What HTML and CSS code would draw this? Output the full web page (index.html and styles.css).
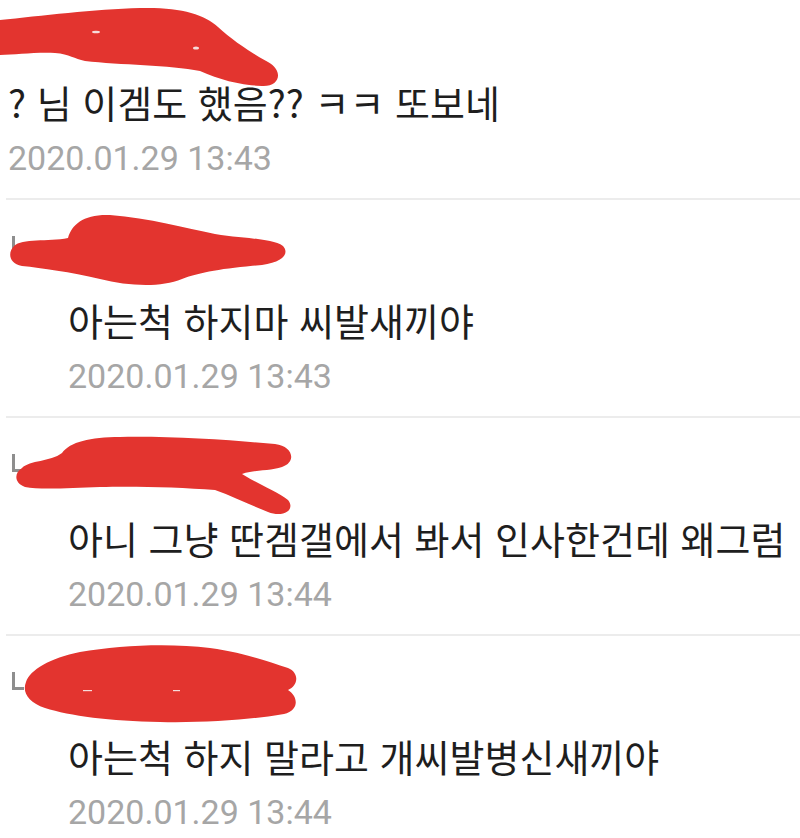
FILE: index.html
```
<!DOCTYPE html>
<html lang="ko">
<head>
    <meta charset="UTF-8">
    <meta name="viewport" content="width=device-width, initial-scale=1.0">
    <title>댓글</title>
    <link rel="stylesheet" href="styles.css">
</head>
<body>
    <div class="thread">
        <div class="comment first">
            <div class="author"></div>
            <p class="body">? 님 이겜도 했음?? ㅋㅋ 또보네</p>
            <p class="date">2020.01.29 13:43</p>
            <svg class="scribble" width="320" height="110" viewBox="0 0 320 110">
                <path d="M0,20 C40,16 95,9 140,8 C180,7 204,14 218,27 C232,40 250,52 268,62 C284,71 280,87 262,86 C240,85 220,80 200,71 C170,65 120,65 85,61 C74,59 70,54 55,53 C35,52 15,55 0,55 Z"/>
                <ellipse class="speck" cx="96" cy="32" rx="4" ry="1.3"/>
                <ellipse class="speck" cx="196" cy="48" rx="3" ry="1.6"/>
            </svg>
        </div>

        <div class="comment reply">
            <div class="author"><span class="reply-mark"></span></div>
            <p class="body">아는척 하지마 씨발새끼야</p>
            <p class="date">2020.01.29 13:43</p>
            <svg class="scribble" width="320" height="110" viewBox="0 200 320 110">
                <path d="M14,246 C22,238 48,242 68,238 C72,224 84,214 110,215 C150,218 185,228 215,234 C245,239 272,238 283,246 C290,254 282,262 262,265 C225,268 200,272 182,279 C160,288 128,286 100,279 C70,272 42,268 22,266 C8,263 8,252 14,246 Z"/>
            </svg>
        </div>

        <div class="comment reply">
            <div class="author"><span class="reply-mark"></span></div>
            <p class="body">아니 그냥 딴겜갤에서 봐서 인사한건데 왜그럼</p>
            <p class="date">2020.01.29 13:44</p>
            <svg class="scribble" width="320" height="110" viewBox="0 418 320 110">
                <path d="M22,468 C30,460 50,462 62,453 C70,442 90,437 120,437 C170,436 230,440 275,444 C293,446 297,462 282,467 C270,471 252,470 242,474 C258,484 278,492 288,500 C296,510 283,518 268,512 C250,505 232,496 215,490 C180,487 130,486 100,487 C70,488 40,490 25,487 C14,483 14,473 22,468 Z"/>
            </svg>
        </div>

        <div class="comment reply">
            <div class="author"><span class="reply-mark"></span></div>
            <p class="body">아는척 하지 말라고 개씨발병신새끼야</p>
            <p class="date">2020.01.29 13:44</p>
            <svg class="scribble" width="320" height="110" viewBox="0 636 320 110">
                <path d="M26,682 C30,670 50,658 80,652 C120,645 170,643 210,648 C245,653 270,662 288,668 C300,673 298,686 288,690 C298,696 300,710 284,714 C250,720 200,723 160,722 C110,721 70,716 45,708 C28,702 22,692 26,682 Z"/>
                <rect class="speck" x="83" y="690" width="9" height="1.2"/>
                <rect class="speck" x="173" y="690" width="7" height="1.2"/>
            </svg>
        </div>
    </div>
</body>
</html>
```

FILE: styles.css
```
body {
    margin: 0;
    background: #ffffff;
    font-family: "Noto Sans CJK KR", "Noto Sans", sans-serif;
}
.thread {
    padding-left: 6px;
    overflow: hidden;
    height: 838px;
}
.comment {
    position: relative;
    padding: 18px 0 14px 0;
    border-bottom: 2px solid #ececec;
}
.comment.first {
    padding-top: 0;
}
.author {
    height: 56px;
    margin-bottom: 20px;
    display: flex;
    align-items: center;
    padding-left: 6px;
}
.reply-mark {
    display: block;
    width: 9px;
    height: 15px;
    border-left: 3px solid #8e8e8e;
    border-bottom: 3px solid #8e8e8e;
    margin-top: -2px;
}
.body {
    margin: 0;
    padding-left: 2px;
    font-size: 38px;
    line-height: 52px;
    color: #1e1e1e;
    white-space: nowrap;
}
.date {
    margin: 4px 0 0 0;
    padding-left: 2px;
    font-family: Roboto, "Liberation Sans", sans-serif;
    font-size: 34px;
    line-height: 52px;
    color: #a6a6a6;
}
.reply .body,
.reply .date {
    padding-left: 62px;
}
.scribble {
    position: absolute;
    left: -6px;
    top: 0;
    overflow: visible;
    filter: blur(0.7px);
}
.scribble path {
    fill: #e3342f;
}
.scribble .speck {
    fill: #f6dcda;
}
```
